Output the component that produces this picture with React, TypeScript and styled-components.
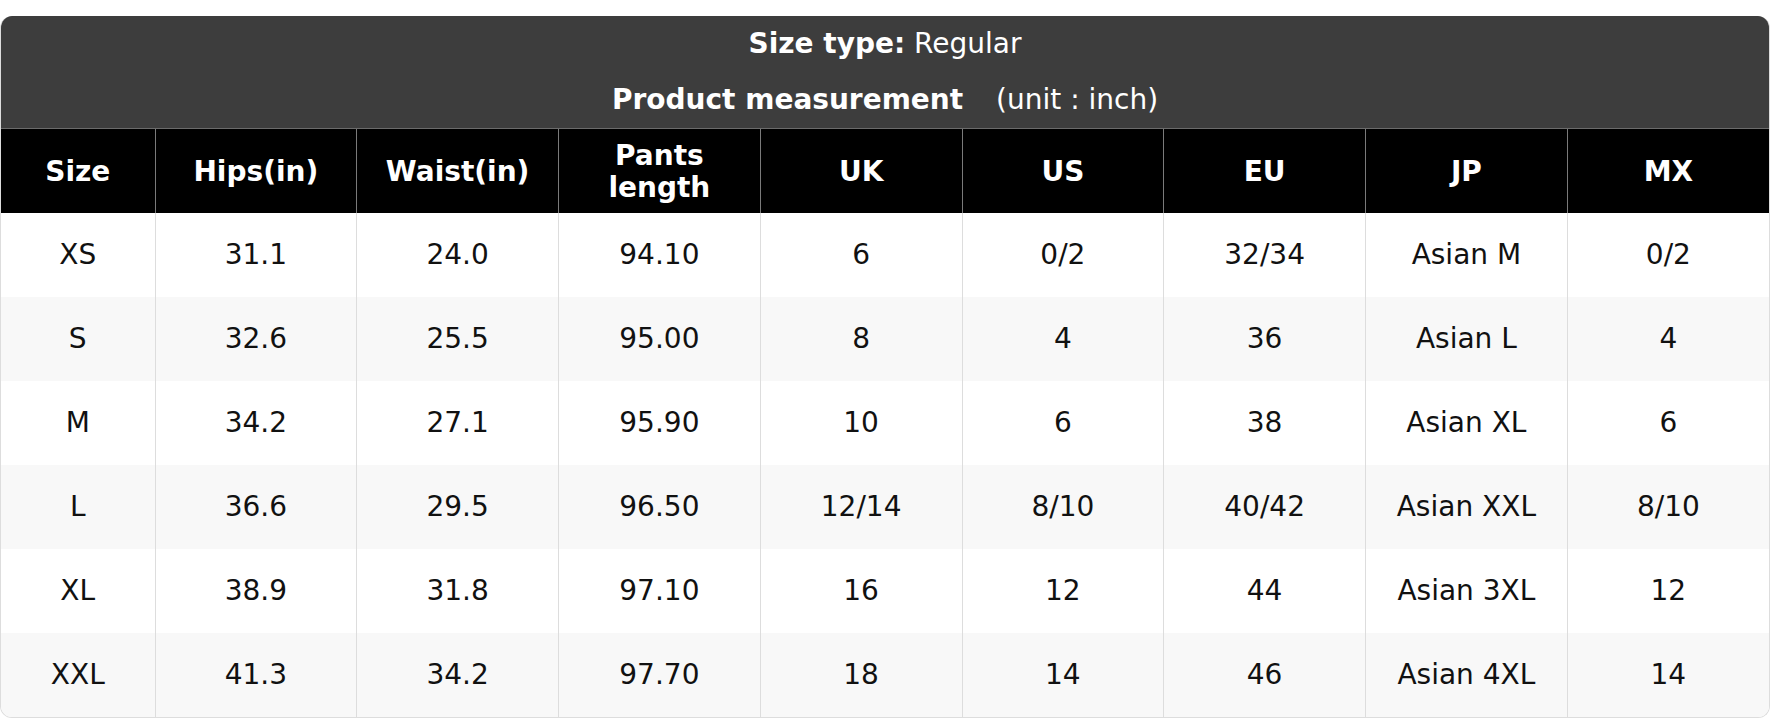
import React from 'react';
import styled, { createGlobalStyle } from 'styled-components';

const GlobalStyle = createGlobalStyle`
  html, body {
    margin: 0;
    padding: 0;
    background: #ffffff;
  }
  body {
    font-family: 'DejaVu Sans', Verdana, sans-serif;
  }
`;

const columns = ['Size', 'Hips(in)', 'Waist(in)', 'Pants\nlength', 'UK', 'US', 'EU', 'JP', 'MX'];

const rows = [
  ['XS', '31.1', '24.0', '94.10', '6', '0/2', '32/34', 'Asian M', '0/2'],
  ['S', '32.6', '25.5', '95.00', '8', '4', '36', 'Asian L', '4'],
  ['M', '34.2', '27.1', '95.90', '10', '6', '38', 'Asian XL', '6'],
  ['L', '36.6', '29.5', '96.50', '12/14', '8/10', '40/42', 'Asian XXL', '8/10'],
  ['XL', '38.9', '31.8', '97.10', '16', '12', '44', 'Asian 3XL', '12'],
  ['XXL', '41.3', '34.2', '97.70', '18', '14', '46', 'Asian 4XL', '14'],
];

const Page = styled.div`
  padding-top: 16px;
`;

const Card = styled.section`
  width: 1770px;
  box-sizing: border-box;
  border: 1px solid #dddddd;
  border-top: none;
  border-radius: 12px;
  overflow: hidden;
  background: #ffffff;
`;

const TitleBar = styled.div`
  background: #3d3d3d;
  color: #ffffff;
  text-align: center;
  font-size: 28px;
`;

const TitleLine = styled.div`
  line-height: 56px;
  height: 56px;
  white-space: nowrap;
`;

const Unit = styled.span`
  margin-left: 24px;
  font-weight: normal;
`;

const Table = styled.table`
  width: 100%;
  table-layout: fixed;
  border-collapse: collapse;
  font-size: 28px;
`;

const HeadCell = styled.th`
  height: 84px;
  box-sizing: border-box;
  padding: 3px 8px 0;
  background: #000000;
  color: #ffffff;
  font-weight: bold;
  line-height: 32px;
  text-align: center;
  vertical-align: middle;
  white-space: pre-line;
  border-top: 1px solid #6b6b6b;
  & + & {
    border-left: 1px solid #7a7a7a;
  }
`;

const Row = styled.tr<{ $striped: boolean }>`
  background: ${p => (p.$striped ? '#f8f8f8' : '#ffffff')};
`;

const Cell = styled.td`
  height: 84px;
  padding: 0 8px;
  color: #111111;
  text-align: center;
  vertical-align: middle;
  white-space: nowrap;
  & + & {
    border-left: 1px solid #dddddd;
  }
`;

const App: React.FC = () => {
  return (
    <Page>
      <GlobalStyle />
      <Card>
        <TitleBar>
          <TitleLine>
            <strong>Size type:</strong> Regular
          </TitleLine>
          <TitleLine>
            <strong>Product measurement</strong> <Unit>(unit : inch)</Unit>
          </TitleLine>
        </TitleBar>
        <Table>
          <colgroup>
            <col style={{ width: 154 }} />
            {columns.slice(1).map(c => (
              <col key={c} />
            ))}
          </colgroup>
          <thead>
            <tr>
              {columns.map(c => (
                <HeadCell key={c}>{c}</HeadCell>
              ))}
            </tr>
          </thead>
          <tbody>
            {rows.map((r, i) => (
              <Row key={r[0]} $striped={i % 2 === 1}>
                {r.map((v, j) => (
                  <Cell key={j}>{v}</Cell>
                ))}
              </Row>
            ))}
          </tbody>
        </Table>
      </Card>
    </Page>
  );
};

export default App;
